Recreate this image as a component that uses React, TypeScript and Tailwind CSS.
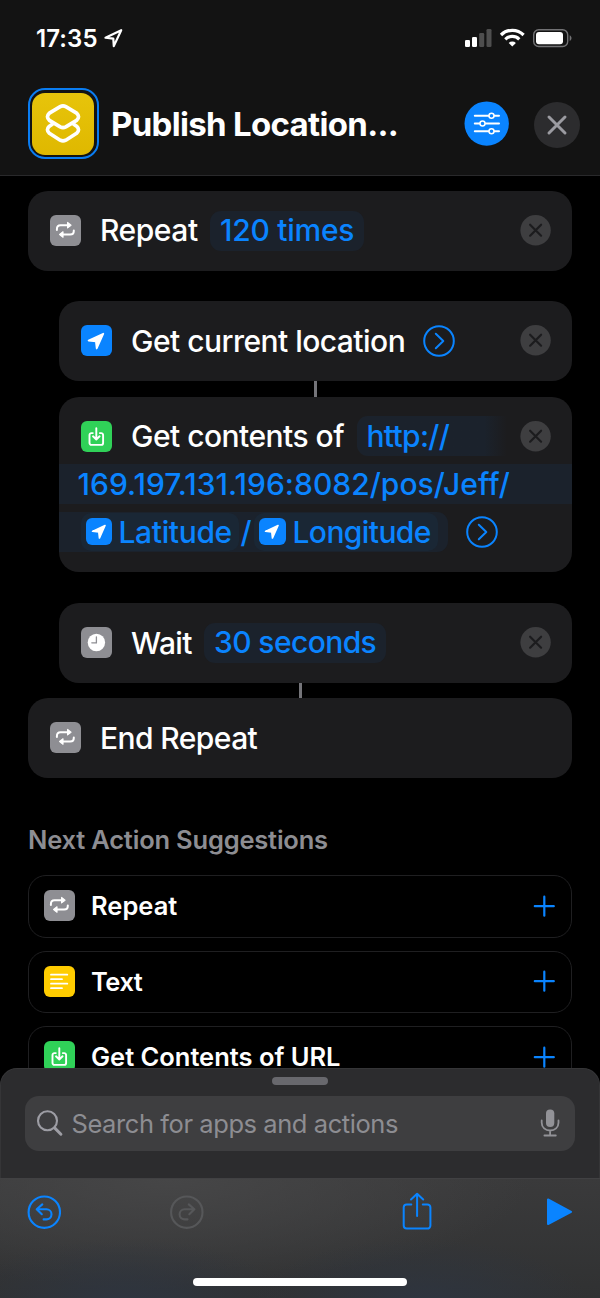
import type { ReactNode } from "react";

type GlyphName = "repeat" | "location" | "download" | "clock" | "text";

const tileColors: Record<GlyphName, string> = {
  repeat: "bg-[#8e8e93]",
  location: "bg-[#0a84ff]",
  download: "bg-[#30d158]",
  clock: "bg-[#8e8e93]",
  text: "bg-[#ffcc00]",
};

function Glyph({ name }: { name: GlyphName }) {
  switch (name) {
    case "repeat":
      return (
        <g fill="none" stroke="#fff" strokeWidth="2" strokeLinecap="round" strokeLinejoin="round">
          <path d="M6.9 15v-1c0-2.3 1.3-3.8 3.6-3.8H17M23.8 15.6v.4c0 2.3-1.3 3.5-3.6 3.5H13.5" />
          <path d="M17.6 7.5v5.4l3.4-2.7zM13 16.8v5.4l-3.4-2.7z" fill="#fff" strokeWidth="1.2" />
        </g>
      );
    case "location":
      return <path d="M22.3 8.7 7.6 15.6l7.3.7.8 7.2z" fill="#fff" stroke="#fff" strokeWidth="1.8" strokeLinejoin="round" />;
    case "download":
      return (
        <g fill="none" stroke="#fff" strokeWidth="1.9" strokeLinecap="round" strokeLinejoin="round">
          <path d="M11.8 12.1H10.4a1.9 1.9 0 0 0-1.9 1.9v8a1.9 1.9 0 0 0 1.9 1.9h9.8a1.9 1.9 0 0 0 1.9-1.9v-8a1.9 1.9 0 0 0-1.9-1.9h-1.4" />
          <path d="M15.3 7.2v11M12 15.3l3.3 3.2 3.3-3.2" />
        </g>
      );
    case "clock":
      return (
        <g>
          <circle cx="15.4" cy="15.5" r="8.7" fill="#fff" />
          <path d="M15.4 10v5.8h-4.6" fill="none" stroke="#8e8e93" strokeWidth="1.3" strokeLinecap="round" />
        </g>
      );
    case "text":
      return <path d="M7 8.7h16.3M7 13.2h11M7 17.7h16.3M7 22.2h11" stroke="#fff" strokeWidth="1.8" strokeLinecap="round" />;
  }
}

function Tile({ name, small = false }: { name: GlyphName; small?: boolean }) {
  return (
    <div className={`shrink-0 overflow-hidden rounded-[6px] ${tileColors[name]} ${small ? "size-[26.5px]" : "size-[31px]"}`}>
      <svg viewBox="0 0 31 31" className="block size-full">
        <Glyph name={name} />
      </svg>
    </div>
  );
}

function RemoveButton() {
  return (
    <button className="ml-auto shrink-0" aria-label="Remove">
      <svg viewBox="0 0 31 31" className="block size-[31px]">
        <circle cx="15.6" cy="15.2" r="15.2" fill="#3e3e40" />
        <path d="m10.1 9.7 11 11M21.1 9.7l-11 11" stroke="#1c1c1e" strokeWidth="2.2" strokeLinecap="round" />
      </svg>
    </button>
  );
}

function ExpandButton() {
  return (
    <button className="shrink-0" aria-label="Show more">
      <svg viewBox="0 0 32 32" className="block size-8" fill="none" stroke="#0a84ff" strokeLinecap="round" strokeLinejoin="round">
        <circle cx="16" cy="16" r="14.8" strokeWidth="2" />
        <path d="m12.8 8.8 7.5 7.2-7.5 7.2" strokeWidth="2" />
      </svg>
    </button>
  );
}

function Label({ width, className, children }: { width: string; className: string; children: ReactNode }) {
  return <span className={`shrink-0 whitespace-nowrap ${width} ${className}`}>{children}</span>;
}

function Connector({ indented = false }: { indented?: boolean }) {
  return (
    <div className={`flex justify-center ${indented ? "h-4 pl-[31px]" : "h-[15px]"}`}>
      <div className="w-[3px] bg-[#747479]" />
    </div>
  );
}

function StatusBar() {
  return (
    <div className="flex h-[76px] items-center pl-[36px] pr-[28px]">
      <span className="w-[68px] whitespace-nowrap pt-px text-[24px] font-semibold tracking-[0.1px] text-white">17:35</span>
      <svg viewBox="0 0 20 20" className="size-5" fill="none" stroke="#fff" strokeWidth="2.2" strokeLinejoin="round">
        <path d="M17.2 2.2 1.5 9.7l7.8.9.5 7.5z" />
      </svg>
      <svg viewBox="0 0 108 20" className="ml-auto h-5 w-[108px]">
        <g fill="#fff">
          <rect x="1" y="12" width="5" height="7" rx="1.3" />
          <rect x="8" y="9" width="5" height="10" rx="1.3" />
          <rect x="15.2" y="5" width="5" height="14" rx="1.3" opacity=".25" />
          <rect x="22.5" y="1" width="5" height="18" rx="1.3" opacity=".25" />
        </g>
        <g fill="none" stroke="#fff" strokeWidth="3.2">
          <path d="M37 7a16 16 0 0 1 22.6 0" />
          <path d="M41.3 11.3a10 10 0 0 1 14 0" />
        </g>
        <path d="m48.3 18.5-3.6-3.6a5.2 5.2 0 0 1 7.2 0z" fill="#fff" />
        <rect x="69.7" y="1.7" width="34" height="16.8" rx="5" fill="none" stroke="#727274" strokeWidth="1.4" />
        <rect x="72" y="4" width="27" height="12.2" rx="3" fill="#fff" />
        <path d="M105.7 7.2c1.1.5 1.8 1.7 1.8 2.9s-.7 2.4-1.8 2.9z" fill="#727274" />
      </svg>
    </div>
  );
}

function Header() {
  return (
    <header className="h-[176px] shrink-0 border-b border-[#29292b] bg-[#131313]">
      <StatusBar />
      <div className="flex items-center pl-[28px] pr-5 pt-3">
        <div className="size-[71px] shrink-0 rounded-[17px] border-2 border-[#0a7df2] pl-[2px] pt-[3px]">
          <div className="size-[62px] rounded-[13px] bg-linear-to-b from-[#e7c40b] to-[#dfb800]">
            <svg viewBox="0 0 62 62" className="size-full" fill="none" stroke="#fff" strokeWidth="3.7" strokeLinejoin="round" strokeLinecap="round">
              <path d="M28.2 13.7Q31 12.2 33.8 13.7L44.6 20.1Q48.5 23.8 44.6 27.3L33.8 33.9Q31 35.3 28.2 33.9L17.4 27.3Q13.5 23.8 17.4 20.1Z" />
              <path d="m20.3 31.3-2.9 1.9q-3.9 3.6 0 7.1l10.8 6.9q2.8 1.4 5.6 0l10.8-6.9q3.9-3.5 0-7.1l-2.9-1.9" />
            </svg>
          </div>
        </div>
        <h1 className="ml-[12px] w-[353px] whitespace-nowrap pt-[2px] text-[33px] font-bold tracking-[-0.68px] text-white">Publish Location...</h1>
        <button aria-label="Settings" className="shrink-0">
          <svg viewBox="0 0 45 45" className="block size-[45px]">
            <circle cx="22.7" cy="22.6" r="22.2" fill="#0a84ff" />
            <g stroke="#fff" strokeLinecap="round" fill="#0a84ff">
              <path d="M10.8 14.8H35M10.8 22.5H35M10.8 30.3H35" strokeWidth="2" />
              <g strokeWidth="1.5">
                <circle cx="27.5" cy="14.8" r="2.5" />
                <circle cx="18.5" cy="22.5" r="2.5" />
                <circle cx="27.5" cy="30.3" r="2.5" />
              </g>
            </g>
          </svg>
        </button>
        <button aria-label="Close" className="ml-auto shrink-0 pt-[3px]">
          <svg viewBox="0 0 46 46" className="block size-[46px]">
            <circle cx="23" cy="23" r="23" fill="#2c2c2e" />
            <path d="m15 15 16 16M31 15 15 31" stroke="#9b9ba1" strokeWidth="3" strokeLinecap="round" />
          </svg>
        </button>
      </div>
    </header>
  );
}

function Card({ indented = false, children }: { indented?: boolean; children: ReactNode }) {
  return (
    <section className={`flex h-20 items-center rounded-[20px] bg-[#1c1c1e] pr-[21px] pb-px pl-[22px] ${indented ? "ml-[30.5px]" : ""}`}>{children}</section>
  );
}

function Pill({ className, children }: { className: string; children: ReactNode }) {
  return <span className={`flex h-10 shrink-0 items-center whitespace-nowrap rounded-[11px] bg-[#1b222c] pb-px pl-[10px] text-[#0a84ff] ${className}`}>{children}</span>;
}

function Variable({ className, children }: { className: string; children: ReactNode }) {
  return (
    <span className={`flex h-[38px] shrink-0 items-center whitespace-nowrap rounded-[10px] bg-[#1a2735] pl-[5px] ${className}`}>
      <Tile name="location" small />
      {children}
    </span>
  );
}

function Suggestion({ name, tracking, label }: { name: GlyphName; tracking: string; label: string }) {
  return (
    <li className="flex h-[62.5px] shrink-0 items-center rounded-[18px] border border-[#1f1f21] pb-px pl-[15px] pr-[16px]">
      <Tile name={name} />
      <span className={`ml-[16px] whitespace-nowrap text-[25.5px] font-semibold text-white ${tracking}`}>{label}</span>
      <svg viewBox="0 0 22 22" className="ml-auto size-[22px]" stroke="#0a84ff" strokeWidth="2.2" strokeLinecap="round">
        <path d="M11.3 1.7v19M1.8 11.2h19" />
      </svg>
    </li>
  );
}

function BottomPanel() {
  return (
    <div className="absolute inset-x-0 bottom-0 h-[230px]">
      <div className="h-[110px] rounded-t-[17px] border-x border-t border-[#353537] bg-[#2c2c2e] px-6 pt-2">
        <div className="mx-auto h-2 w-[56px] rounded-full bg-[#68686d]" />
        <div className="mt-[10.5px] flex h-[55px] items-center rounded-[14px] bg-[#3e3e40] pl-[11px] pr-[14px]">
          <svg viewBox="0 0 28 28" className="size-7" fill="none" stroke="#9d9da4" strokeLinecap="round">
            <circle cx="11.5" cy="11.8" r="9.5" strokeWidth="2.1" />
            <path d="m18.6 18.9 6.3 6.3" strokeWidth="3" />
          </svg>
          <span className="ml-[7.5px] whitespace-nowrap pt-[2px] text-[25.5px] font-normal tracking-[-0.43px] text-[#8d8d92]">Search for apps and actions</span>
          <svg viewBox="0 0 22 30" className="ml-auto h-[30px] w-[22px]" fill="none" stroke="#929297" strokeWidth="1.8" strokeLinecap="round">
            <rect x="7" y="1.5" width="8.3" height="17.5" rx="4.1" fill="#929297" stroke="none" />
            <path d="M2.7 12.5v2.2c0 4.6 3.6 7.8 8.4 7.8s8.4-3.2 8.4-7.8v-2.2M11.1 22.5v5M5.4 27.5h11.4" />
          </svg>
        </div>
      </div>
      <div className="flex h-[120px] flex-col border-t border-[#414143] bg-[radial-gradient(ellipse_170px_65px_at_125px_125px,#2e3540_0%,#2e354000_100%),radial-gradient(ellipse_170px_65px_at_420px_125px,#2e3540_0%,#2e354000_100%),radial-gradient(ellipse_360px_110px_at_170px_0px,#464647_0%,#46464700_100%),linear-gradient(to_bottom,#3a3a3b,#303132)]">
        <div className="flex h-[66px] items-center pl-[27px] pr-[27px]">
          <button aria-label="Undo">
            <svg viewBox="0 0 34 34" className="block size-[34px]" fill="none" stroke="#0a84ff" strokeWidth="2.1" strokeLinecap="round" strokeLinejoin="round">
              <circle cx="17.3" cy="17.2" r="15.7" />
              <path d="M15.3 9.4 9.7 14.2l5.1 5M10 14.2h9.4a5.1 5.1 0 0 1 0 10.2h-2.8" />
            </svg>
          </button>
          <button aria-label="Redo" className="ml-[109px]">
            <svg viewBox="0 0 34 34" className="block size-[34px]" fill="none" stroke="#565759" strokeWidth="2.1" strokeLinecap="round" strokeLinejoin="round">
              <circle cx="16.8" cy="17.2" r="15.7" />
              <path d="m18.8 9.4 5.6 4.8-5.1 5M24.1 14.2h-9.4a5.1 5.1 0 0 0 0 10.2h2.8" />
            </svg>
          </button>
          <button aria-label="Share" className="ml-[197px]">
            <svg viewBox="0 0 32 40" className="block h-10 w-8" fill="none" stroke="#0a84ff" strokeWidth="2" strokeLinecap="round" strokeLinejoin="round">
              <path d="M10.3 12.4H5.7a3 3 0 0 0-3 3v18.2a3 3 0 0 0 3 3h20.7a3 3 0 0 0 3-3V15.4a3 3 0 0 0-3-3h-4.6" />
              <path d="M16.1 24V2M10 7.5l6.1-5.8 6.1 5.8" />
            </svg>
          </button>
          <button aria-label="Run" className="ml-auto">
            <svg viewBox="0 0 27 30" className="block h-[30px] w-[27px]">
              <path d="M2 2.5v24.6L25.1 14.8z" fill="#0a84ff" stroke="#0a84ff" strokeWidth="2" strokeLinejoin="round" />
            </svg>
          </button>
        </div>
        <div className="mx-auto mt-[32.5px] h-[8.5px] w-[214px] rounded-full bg-white" />
      </div>
    </div>
  );
}

export default function App() {
  return (
    <div className="relative flex h-[1298px] w-[600px] flex-col overflow-hidden bg-black font-['Inter',sans-serif] text-[30px] leading-none font-medium text-white">
      <Header />
      <main className="px-7 pt-[15px]">
        <Card>
          <Tile name="repeat" />
          <Label width="w-[110px]" className="ml-[19px] pb-px tracking-[-0.45px]">Repeat</Label>
          <Pill className="w-[154px] tracking-[-0.25px]">120 times</Pill>
          <RemoveButton />
        </Card>
        <div className="h-[30px]" />
        <Card indented>
          <Tile name="location" />
          <Label width="w-[292px]" className="ml-[19.5px] tracking-[-0.53px]">Get current location</Label>
          <ExpandButton />
          <RemoveButton />
        </Card>
        <Connector indented />
        <section className="ml-[30.5px] h-[175px] overflow-hidden rounded-[20px] bg-[#1c1c1e] pt-[19px]">
          <div className="flex h-10 items-center pl-[22px] pr-[21px]">
            <Tile name="download" />
            <Label width="w-[225.5px]" className="ml-[19.5px] tracking-[-0.53px]">Get contents of</Label>
            <span className="flex h-10 w-[150px] items-center rounded-l-[11px] bg-linear-to-r from-[#1b222c] from-85% to-[#1c1c1e] pl-[10px] tracking-[-0.7px] text-[#0a84ff]">http://</span>
            <RemoveButton />
          </div>
          <div className="mt-2 flex h-10 items-center whitespace-nowrap bg-[#1b222c] pl-[19px] tracking-[0.03px] text-[#0a84ff]">169.197.131.196:8082/pos/Jeff/</div>
          <div className="mt-[7.5px] flex h-10 items-center text-[#0a84ff]">
            <div className="flex h-10 w-[389px] items-center rounded-r-[11px] bg-[#1b222c] pl-[22px]">
              <Variable className="w-[158px] gap-[6.5px] tracking-[-0.35px]">Latitude</Variable>
              <span className="w-[15.5px] pl-[2px]">/</span>
              <Variable className="w-[184px] gap-[7px] tracking-[-0.6px]">Longitude</Variable>
            </div>
            <div className="ml-[18px] flex pt-px">
              <ExpandButton />
            </div>
          </div>
        </section>
        <div className="h-[31px]" />
        <Card indented>
          <Tile name="clock" />
          <Label width="w-[73px]" className="ml-[19.5px] tracking-[-0.6px]">Wait</Label>
          <Pill className="w-[182px] tracking-[-0.6px]">30 seconds</Pill>
          <RemoveButton />
        </Card>
        <Connector />
        <Card>
          <Tile name="repeat" />
          <Label width="w-[200px]" className="ml-[19px] tracking-[-0.58px]">End Repeat</Label>
        </Card>
        <h2 className="mt-[49px] h-[26px] whitespace-nowrap text-[25.5px] leading-[26px] font-semibold tracking-[-0.2px] text-[#8d8d92]">Next Action Suggestions</h2>
        <ul className="mt-[22px] flex flex-col gap-[13px]">
          <Suggestion name="repeat" tracking="tracking-[0px]" label="Repeat" />
          <Suggestion name="text" tracking="tracking-[-0.5px]" label="Text" />
          <Suggestion name="download" tracking="tracking-[-0.02px]" label="Get Contents of URL" />
        </ul>
      </main>
      <BottomPanel />
    </div>
  );
}
